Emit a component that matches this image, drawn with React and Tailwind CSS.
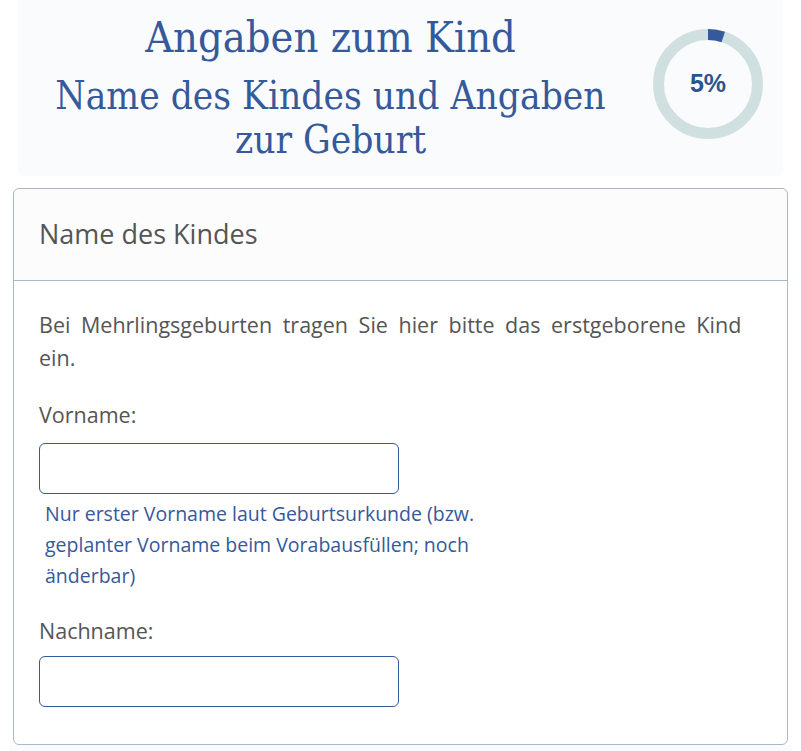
import React from "react";

function ProgressRing({ percent }) {
  const r = 49.5;
  const c = 2 * Math.PI * r;
  return (
    <div className="relative w-[112px] h-[112px]">
      <svg width="112" height="112" viewBox="0 0 112 112">
        <circle cx="56" cy="56" r={r} fill="none" stroke="#d0e0e0" strokeWidth="11" />
        <circle
          cx="56"
          cy="56"
          r={r}
          fill="none"
          stroke="#35599a"
          strokeWidth="11"
          strokeDasharray={`${(c * percent) / 100} ${c}`}
          transform="rotate(-90 56 56)"
        />
      </svg>
      <div className="absolute inset-0 flex items-center justify-center font-['Liberation_Sans',Arial,sans-serif] font-bold text-[25px] text-[#2d5390]">
        {percent}%
      </div>
    </div>
  );
}

export default function App() {
  return (
    <div className="bg-white w-[801px] h-[751px] overflow-hidden font-['Open_Sans','Noto_Sans',sans-serif]">
      {/* Page header */}
      <div className="mx-[18px] h-[176px] bg-[#f9fbfd] rounded-b-md flex items-center">
        <div className="flex-1 text-center font-['DejaVu_Serif_Condensed','DejaVu_Serif',serif] text-[#35599a] pl-2 -mt-[2px]">
          <h1 className="text-[43px] leading-[50px]">Angaben zum Kind</h1>
          <h2 className="text-[38.5px] leading-[44px] mt-[12px]">
            Name des Kindes und Angaben
            <br />
            zur Geburt
          </h2>
        </div>
        <div className="w-[148px] flex justify-center pr-[2px] -mt-[8px]">
          <ProgressRing percent={5} />
        </div>
      </div>

      {/* Card */}
      <div className="mx-[13px] mt-[12px] border border-[#aab7c4] rounded-md bg-white">
        <div className="h-[92px] px-[25px] flex items-center bg-[#fcfcfc] border-b border-[#aab7c4] rounded-t-md">
          <h3 className="text-[27px] text-[#555555]">Name des Kindes</h3>
        </div>
        <div className="px-[25px] pt-[27px] pb-[37px] text-[#555555]">
          <p className="w-[710px] text-[21.5px] leading-[33px] [word-spacing:5px]">
            Bei Mehrlingsgeburten tragen Sie hier bitte das erstgeborene Kind ein.
          </p>
          <label className="block text-[21.5px] leading-[30px] mt-[26px]">Vorname:</label>
          <input
            type="text"
            className="block mt-[13px] w-[360px] h-[51px] border border-[#35599a] rounded-md bg-white"
          />
          <p className="mt-[4px] ml-[6px] w-[470px] text-[19.5px] leading-[31px] text-[#35599a]">
            Nur erster Vorname laut Geburtsurkunde (bzw. geplanter Vorname beim Vorabausfüllen; noch änderbar)
          </p>
          <label className="block text-[21.5px] leading-[30px] mt-[25px]">Nachname:</label>
          <input
            type="text"
            className="block mt-[10px] w-[360px] h-[51px] border border-[#35599a] rounded-md bg-white"
          />
        </div>
      </div>
      <div className="mx-[9px] h-[10px] bg-[#f9fbfd]" />
    </div>
  );
}
